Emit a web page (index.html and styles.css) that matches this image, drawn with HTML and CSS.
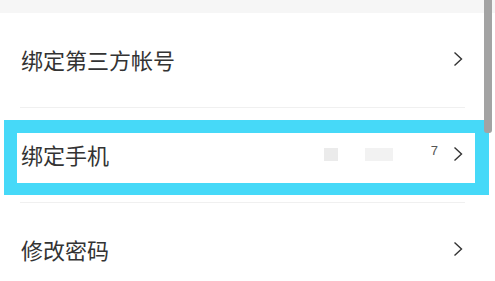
FILE: index.html
```html
<!DOCTYPE html>
<html lang="zh-CN">
<head>
<meta charset="utf-8">
<link rel="stylesheet" href="styles.css">
</head>
<body>
<div class="page">
  <div class="topband"></div>
  <div class="list">
    <div class="row">
      <span class="label">绑定第三方帐号</span>
      <span class="right">
        <svg class="chev" viewBox="0 0 10 16" width="10" height="16"><path d="M1.5 1.5 L8.5 8 L1.5 14.5" fill="none" stroke="#333" stroke-width="1.4"/></svg>
      </span>
    </div>
    <div class="divider"></div>
    <div class="row">
      <span class="label">绑定手机</span>
      <span class="right">
        <span class="mask mask-a"></span>
        <span class="mask mask-b"></span>
        <span class="tail">7</span>
        <svg class="chev" viewBox="0 0 10 16" width="10" height="16"><path d="M1.5 1.5 L8.5 8 L1.5 14.5" fill="none" stroke="#333" stroke-width="1.4"/></svg>
      </span>
    </div>
    <div class="divider"></div>
    <div class="row">
      <span class="label">修改密码</span>
      <span class="right">
        <svg class="chev" viewBox="0 0 10 16" width="10" height="16"><path d="M1.5 1.5 L8.5 8 L1.5 14.5" fill="none" stroke="#333" stroke-width="1.4"/></svg>
      </span>
    </div>
  </div>
  <div class="highlight"></div>
  <div class="scrollbar"></div>
</div>
</body>
</html>
```
FILE: styles.css
```css
html, body {
  margin: 0;
  padding: 0;
  background: #ffffff;
}
.page {
  position: relative;
  width: 495px;
  height: 281px;
  overflow: hidden;
  font-family: "Noto Sans CJK SC", "Noto Sans", sans-serif;
  color: #333333;
}
.topband {
  height: 13px;
  background: #f6f6f6;
}
.list {
  display: flex;
  flex-direction: column;
}
.row {
  height: 92px;
  display: flex;
  align-items: center;
  justify-content: space-between;
  padding: 0 32px 2px 21px;
}
.label {
  font-size: 22px;
  line-height: 1;
}
.right {
  display: flex;
  align-items: center;
}
.chev {
  display: block;
}
.divider {
  height: 1px;
  background: #f0f0f0;
  margin: 0 30px 0 20px;
}
.mask {
  display: block;
  height: 13px;
}
.mask-a {
  width: 14px;
  background: #ebebeb;
  margin-right: 27px;
}
.mask-b {
  width: 28px;
  background: #f2f2f2;
  margin-right: 38px;
}
.tail {
  font-family: "Liberation Sans", sans-serif;
  font-size: 13px;
  line-height: 1;
  color: #555;
  margin-right: 15px;
  position: relative;
  top: -4px;
}
.highlight {
  position: absolute;
  left: 4px;
  top: 120px;
  width: 458px;
  height: 50px;
  border: 13px solid #46d9f8;
  border-right-width: 14px;
  border-bottom-width: 12px;
}
.scrollbar {
  position: absolute;
  left: 484px;
  top: 0;
  width: 8px;
  height: 133px;
  background: #a3a3a3;
  border-radius: 0 0 3px 3px;
}
```
